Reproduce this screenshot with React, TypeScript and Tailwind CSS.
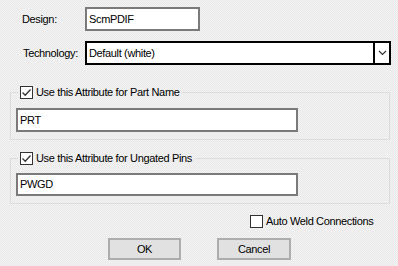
import React from "react";

const font = { fontFamily: '"Liberation Sans", Arial, sans-serif' };

const CheckBox: React.FC<{ checked?: boolean }> = ({ checked }) => (
  <span className="w-[13px] h-[13px] border border-[#333333] bg-white flex items-center justify-center shrink-0">
    {checked && (
      <svg width="11" height="11" viewBox="0 0 11 11">
        <polyline points="1.5,5.5 4.2,8.2 9.5,2.5" fill="none" stroke="#333" strokeWidth="1.3" />
      </svg>
    )}
  </span>
);

const GroupBox: React.FC<{ label: string; value: string; top: string; inputTop: string; inputH: string }> = ({
  label,
  value,
  top,
  inputTop,
  inputH,
}) => (
  <fieldset className={`ml-[10px] w-[380px] border border-[#dcdcdc] pl-[5px] pb-[7px] ${top}`}>
    <legend className="ml-[2px] pl-[2px] pr-[3px] h-[14px] flex items-center gap-[3px] text-black">
      <CheckBox checked />
      <span>{label}</span>
    </legend>
    <div className={`w-[282px] ${inputH} border-2 border-[#7a7a7a] bg-white flex items-center pl-[2px] ${inputTop}`}>
      {value}
    </div>
  </fieldset>
);

export default function App() {
  return (
    <div
      className="w-[398px] h-[266px] overflow-hidden bg-[#f0f0f0] bg-[repeating-conic-gradient(#f3f3f3_0_25%,#e9e9e9_0_50%)] bg-[length:2px_2px] text-black pt-[7px] text-[11px] tracking-[-0.35px]"
      style={font}
    >
      {/* Design */}
      <div className="flex items-center h-[24px]">
        <span className="w-[85px] pl-[22px]">Design:</span>
        <div className="w-[115px] h-[24px] border-2 border-[#7a7a7a] bg-white flex items-center pl-[2px]">
          ScmPDIF
        </div>
      </div>

      {/* Technology */}
      <div className="flex items-center h-[24px] mt-[10px]">
        <span className="w-[85px] pl-[23px]">Technology:</span>
        <div className="w-[306px] h-[24px] border-2 border-black bg-white flex items-stretch">
          <span className="flex-1 flex items-center pl-[2px]">Default (white)</span>
          <span className="w-[16px] border-l-2 border-black flex items-center justify-center">
            <svg width="9" height="6" viewBox="0 0 9 6">
              <polyline points="1,1 4.5,4.5 8,1" fill="none" stroke="#333" strokeWidth="1.2" />
            </svg>
          </span>
        </div>
      </div>

      <GroupBox label="Use this Attribute for Part Name" value="PRT" top="mt-[20px]" inputTop="mt-[9px]" inputH="h-[24px]" />
      <GroupBox label="Use this Attribute for Ungated Pins" value="PWGD" top="mt-[11px]" inputTop="mt-[8px]" inputH="h-[23px]" />

      {/* Auto weld */}
      <div className="flex items-center gap-[3px] ml-[250px] mt-[11px] h-[13px]">
        <CheckBox />
        <span>Auto Weld Connections</span>
      </div>

      {/* Buttons */}
      <div className="flex mt-[10px] ml-[108px] gap-[36px]">
        <button className="w-[73px] h-[22px] border-2 border-[#adadad] bg-[#e1e1e1]">OK</button>
        <button className="w-[74px] h-[22px] border-2 border-[#adadad] bg-[#e1e1e1]">Cancel</button>
      </div>
    </div>
  );
}
